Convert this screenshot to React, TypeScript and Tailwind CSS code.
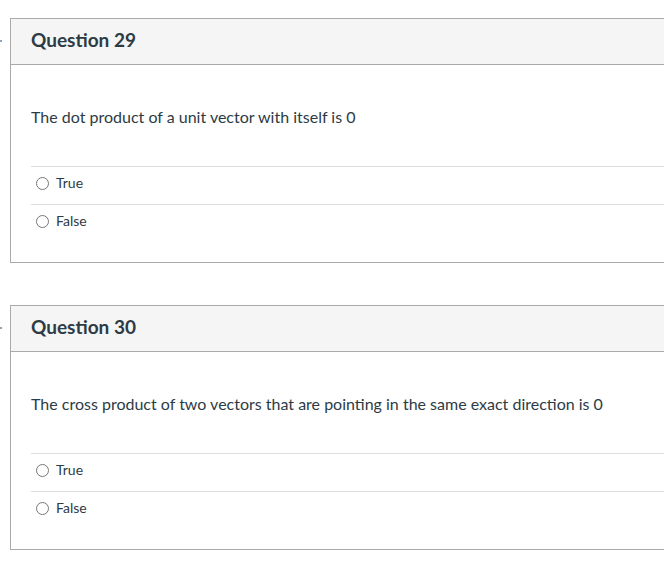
const questions = [
  { id: 29, text: "The dot product of a unit vector with itself is 0" },
  {
    id: 30,
    text: "The cross product of two vectors that are pointing in the same exact direction is 0",
  },
];

function Question({ id, text }: { id: number; text: string }) {
  return (
    <div className="flex items-start">
      {/* clipped flag marker */}
      <div className="mt-[22px] h-[2px] w-[2px] shrink-0 bg-[#8fa3b5]" />
      <div className="ml-[8px] w-[720px] shrink-0 border border-[#aaaaaa] bg-white">
        <div className="flex h-[46px] items-center border-b border-[#aaaaaa] bg-[#f5f5f5] px-[20px] pb-[2px]">
          <h2 className="text-[19px] font-bold text-[#2d3b45]">Question {id}</h2>
        </div>
        <div className="pb-[20px] pl-[20px] pt-[41px]">
          <p className="mb-[38px] text-[16px] leading-[22px] text-[#2d3b45]">{text}</p>
          <div>
            {["True", "False"].map((label) => (
              <label
                key={label}
                className="flex h-[38px] items-center gap-[7px] border-t border-[#dddddd] pb-[7px] pl-[5px] text-[14px] text-[#2d3b45]"
              >
                <span className="mt-[3px] h-[13px] w-[13px] rounded-full border border-[#777777] bg-white" />
                {label}
              </label>
            ))}
          </div>
        </div>
      </div>
    </div>
  );
}

export default function App() {
  return (
    <div
      className="flex min-h-[570px] w-full flex-col gap-[42px] overflow-hidden bg-white pt-[18px]"
      style={{ fontFamily: "Lato, 'Liberation Sans', sans-serif" }}
    >
      {questions.map((q) => (
        <Question key={q.id} {...q} />
      ))}
    </div>
  );
}
